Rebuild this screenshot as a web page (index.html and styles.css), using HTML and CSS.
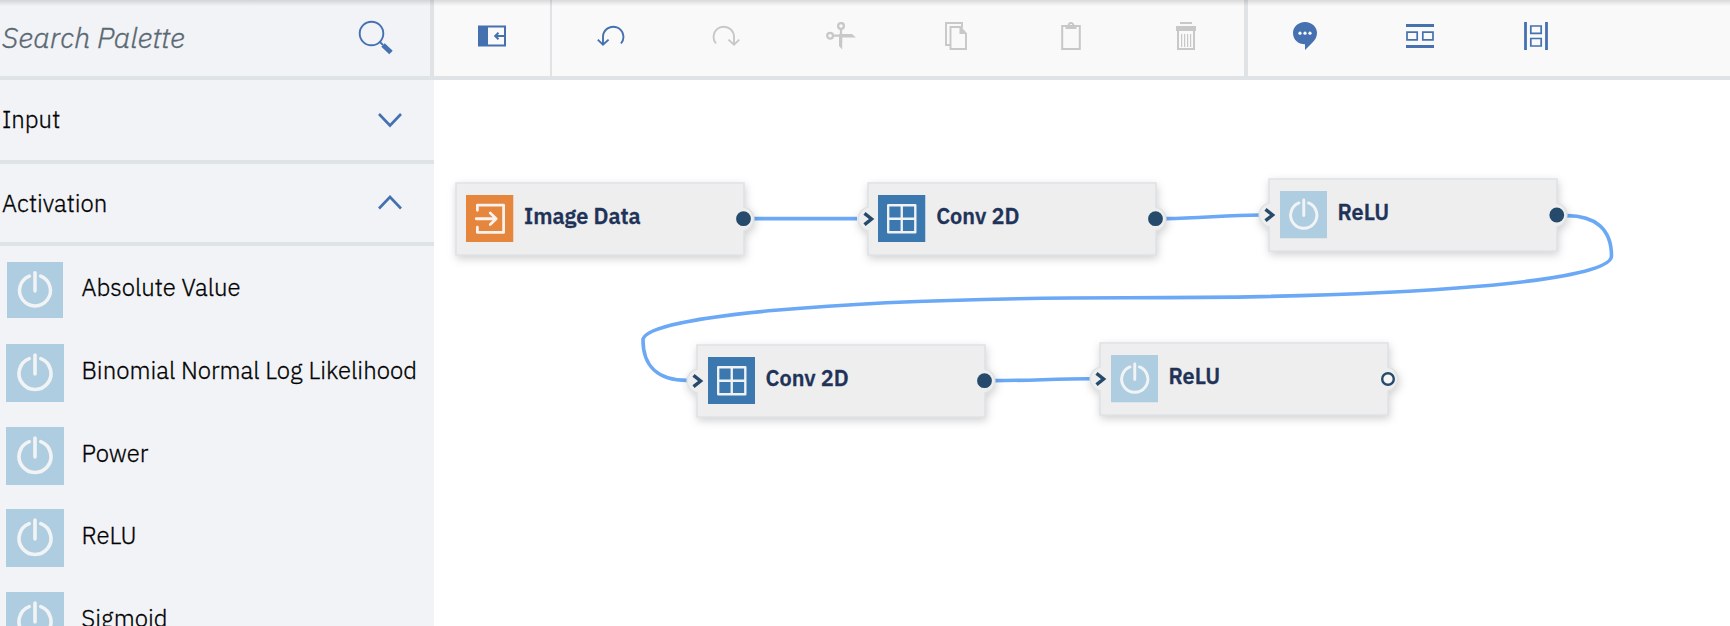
FILE: index.html
```html
<!DOCTYPE html>
<html lang="en">
<head>
<meta charset="utf-8">
<title>Flow editor</title>
<link rel="stylesheet" href="styles.css">
</head>
<body>
<svg class="defs" width="0" height="0" aria-hidden="true">
  <symbol id="power" viewBox="0 0 58 58">
    <rect width="58" height="58" fill="#aecde0"/>
    <path d="M23.2 14.6A16 16 0 1 0 34.8 14.6M29 11V30" fill="none" stroke="#f2f3f5" stroke-width="3.6" stroke-linecap="round"/>
  </symbol>
  <symbol id="grid" viewBox="0 0 48 48">
    <rect width="48" height="48" fill="#3c78b0"/>
    <path d="M10.3 10.3H37.7V37.7H10.3ZM24 10.3V37.7M10.3 24H37.7" fill="none" stroke="#f0f2f4" stroke-width="2.4" stroke-linejoin="round"/>
  </symbol>
  <symbol id="import" viewBox="0 0 48 48">
    <rect width="48" height="48" fill="#e6853c"/>
    <path d="M11.5 15.5V10.3H38V37.8H11.5V32.5M10.3 24H30M24.5 18.2L30.5 24L24.5 29.8" fill="none" stroke="#f6f2f0" stroke-width="2.8" stroke-linecap="round" stroke-linejoin="round"/>
  </symbol>
  <symbol id="shape-start" viewBox="0 0 320 74">
    <path d="M16 1H304V25.2A12 12 0 0 1 304 48.8V73H16Z" fill="#eee" stroke="#dfe3e6" stroke-width="1.6"/>
  </symbol>
  <symbol id="shape" viewBox="0 0 320 74">
    <path d="M16 1H304V25.2A12 12 0 0 1 304 48.8V73H16V48.8A12 12 0 0 1 16 25.2Z" fill="#eee" stroke="#dfe3e6" stroke-width="1.6"/>
    <path d="M12.5 31.3L19.6 37L12.5 42.7" fill="none" stroke="#264a6b" stroke-width="3.4"/>
  </symbol>
</svg>
<div class="app">
  <aside class="palette">
    <div class="search">
      <span class="search-text">Search Palette</span>
      <svg class="search-icon" width="36" height="36" viewBox="0 0 36 36"><circle cx="13.5" cy="13.5" r="11.8" fill="none" stroke="#4671b0" stroke-width="1.9"/><path d="M22 22L25 25" stroke="#4671b0" stroke-width="1.8"/><path d="M25 25L33 32.5" stroke="#4671b0" stroke-width="5"/></svg>
    </div>
    <div class="category"><span>Input</span><svg width="26" height="16" viewBox="0 0 26 16"><path d="M2 2L13 13.5L24 2"/></svg></div>
    <div class="category open"><span>Activation</span><svg width="26" height="16" viewBox="0 0 26 16"><path d="M2 13.5L13 2L24 13.5"/></svg></div>
    <div class="items">
      <div class="item"><svg class="item-icon first"><use href="#power"/></svg><span>Absolute Value</span></div>
      <div class="item"><svg class="item-icon"><use href="#power"/></svg><span>Binomial Normal Log Likelihood</span></div>
      <div class="item"><svg class="item-icon"><use href="#power"/></svg><span>Power</span></div>
      <div class="item"><svg class="item-icon"><use href="#power"/></svg><span>ReLU</span></div>
      <div class="item"><svg class="item-icon"><use href="#power"/></svg><span>Sigmoid</span></div>
    </div>
  </aside>
  <main class="main">
    <div class="toolbar">
      <div class="group one">
        <div class="tool"><svg width="28" height="28" viewBox="0 0 28 28"><path d="M0 3.5H28V24.5H0Z" fill="#4671b0"/><path d="M10 5.5H26V22.5H10Z" fill="#f9f9f9"/><path d="M27 14H18M20.5 10.7L17.2 14L20.5 17.3" fill="none" stroke="#4671b0" stroke-width="2"/></svg></div>
      </div>
      <div class="group six">
        <div class="tool"><svg class="line" width="28" height="28" viewBox="0 0 28 28"><path d="M6 22.5V14.5A10.2 10.2 0 1 1 24 21.5M.8 17.6L6 22.8L11.6 17.6"/></svg></div>
        <div class="tool off"><svg class="line" width="28" height="28" viewBox="0 0 28 28"><path d="M22 22.5V14.5A10.2 10.2 0 1 0 4 21.5M27.2 17.6L22 22.8L16.4 17.6"/></svg></div>
        <div class="tool off"><svg width="30" height="28" viewBox="0 0 30 28"><g fill="none" stroke="#c8c8c8" stroke-width="2.3"><circle cx="4.1" cy="13.7" r="2.9"/><circle cx="15" cy="3.9" r="2.9"/><path d="M7 13.7H24M15 7V20"/></g><path d="M13 12H26L30 15.5H16.2V27.5L13 24Z" fill="#c8c8c8"/></svg></div>
        <div class="tool off"><svg width="24" height="28" viewBox="0 0 24 28"><path d="M6 23H2V1H18V6M6.5 5H16L22 11.5V27H6.5Z" fill="none" stroke="#c8c8c8" stroke-width="1.9"/><path d="M15.5 4L23 12H15.5Z" fill="#c8c8c8"/></svg></div>
        <div class="tool off"><svg width="20" height="28" viewBox="0 0 20 28"><path d="M1.2 4H18.8V27H1.2Z" fill="none" stroke="#c8c8c8" stroke-width="2"/><path fill-rule="evenodd" d="M4.5 7V3.5H6.5Q7 0 10 0T13.5 3.5H15.5V7ZM10 2A1.3 1.3 0 1 0 10 4.6A1.3 1.3 0 1 0 10 2Z" fill="#c8c8c8"/></svg></div>
        <div class="tool off"><svg width="20" height="28" viewBox="0 0 20 28"><path d="M4 0H16V2H4ZM0 4H20V9H0Z" fill="#c8c8c8"/><path d="M2 8V27H18V8" fill="none" stroke="#c8c8c8" stroke-width="2"/><path d="M5.6 12V25M8.6 12V25M11.6 12V25M14.6 12V25" stroke="#c8c8c8" stroke-width="1.2"/></svg></div>
      </div>
      <div class="group rest">
        <div class="tool"><svg width="24" height="28" viewBox="0 0 24 28"><path d="M12 0C19 0 24 5 24 11C24 15 22 18 19 21L12 28V22.3C5 22.3 0 17.5 0 11C0 5 5 0 12 0Z" fill="#4671b0"/><g fill="#fff"><circle cx="7" cy="11.2" r="1.6"/><circle cx="12" cy="11.2" r="1.6"/><circle cx="17" cy="11.2" r="1.6"/></g></svg></div>
        <div class="tool"><svg class="thick" width="28" height="28" viewBox="0 0 28 28"><path class="bar" d="M0 3.5H28M0 24.5H28"/><path d="M1 10.1H11.2V17.8H1ZM16.8 10.1H27V17.8H16.8Z"/></svg></div>
        <div class="tool last"><svg class="thick" width="28" height="28" viewBox="0 0 28 28"><path class="bar" d="M3.5 0V28M24.5 0V28"/><path d="M8.8 4H19.2V11.3H8.8ZM8.8 16.5H19.2V24H8.8Z"/></svg></div>
      </div>
    </div>
    <div class="canvas">
      <svg class="links" width="1296" height="546" viewBox="434 80 1296 546">
        <path d="M754 218.6H857M1166 218.6C1200 218.6 1225 215 1260 215M1567 215.6C1595 215.6 1611.5 229 1611.5 256C1611.5 281 1420 297.8 1127 297.8S643 317 643 340C643 366 658 380.4 687 380.4M994 380.6C1030 380.6 1055 378.8 1090 378.8"/>
      </svg>
      <div class="node n1"><svg class="shape"><use href="#shape-start"/><circle class="dot" cx="303.5" cy="36.7" r="7.4"/></svg><svg class="node-icon"><use href="#import"/></svg><span>Image Data</span></div>
      <div class="node n2"><svg class="shape"><use href="#shape"/><circle class="dot" cx="303.5" cy="36.7" r="7.4"/></svg><svg class="node-icon"><use href="#grid"/></svg><span>Conv 2D</span></div>
      <div class="node n3"><svg class="shape"><use href="#shape"/><circle class="dot" cx="303.8" cy="37" r="7.4"/></svg><svg class="node-icon"><use href="#power"/></svg><span>ReLU</span></div>
      <div class="node n4"><svg class="shape"><use href="#shape"/><circle class="dot" cx="303.5" cy="36.7" r="7.4"/></svg><svg class="node-icon"><use href="#grid"/></svg><span>Conv 2D</span></div>
      <div class="node n5"><svg class="shape"><use href="#shape"/><circle class="ring" cx="304" cy="37" r="5.8"/></svg><svg class="node-icon"><use href="#power"/></svg><span>ReLU</span></div>
    </div>
  </main>
  <div class="top-shadow"></div>
</div>
</body>
</html>
```
FILE: styles.css
```css
* { box-sizing: border-box; }
body { margin: 0; overflow: hidden; font-family: "IBM Plex Sans", Roboto, sans-serif; background: #fff; }
svg { display: block; flex: none; }
.defs { position: absolute; }
.app { position: relative; display: flex; width: 1730px; height: 626px; overflow: hidden; }
.top-shadow { position: absolute; top: 0; left: 0; right: 0; height: 6px; background: linear-gradient(rgba(0,0,0,.13), rgba(0,0,0,0)); }

.palette { width: 434px; flex: none; background: #f1f3f7; color: #000; font-size: 24px; font-weight: 300; white-space: nowrap; -webkit-text-stroke: .3px currentColor; }
.search { display: flex; justify-content: space-between; height: 80px; padding: 19px 36px 0 2px; border-bottom: 4px solid #dfe3e6; border-right: 4px solid #dfe3e6; }
.search-text { font-size: 29px; line-height: 36px; font-style: italic; color: #5a6872; }
.search-icon { margin-top: 1px; }
.category { display: flex; align-items: center; justify-content: space-between; height: 84px; padding: 0 31px 0 2px; border-bottom: 4px solid #dfe3e6; }
.category.open { height: 82px; }
.category span { margin-top: -3px; }
.category.open span { margin-top: -1px; }
.category svg { fill: none; stroke: #4671b0; stroke-width: 2.6; }
.items { padding-top: 3px; }
.item { display: flex; align-items: center; height: 82.7px; padding-left: 6px; }
.item-icon { width: 58px; height: 58px; margin-right: 17.5px; }
.item-icon.first { width: 56px; height: 56px; margin: 0 18.5px 0 1px; }
.item span { margin-top: -6px; }

.main { flex: 1; display: flex; flex-direction: column; }
.toolbar { display: flex; height: 80px; background: #f9f9f9; border-bottom: 4px solid #dfe3e6; }
.group { display: flex; }
.one { width: 118px; border-right: 2px solid #dfe3e6; }
.six { width: 696px; border-right: 4px solid #dfe3e6; padding-left: 1px; }
.rest { flex: 1; }
.tool { flex: 1; display: flex; justify-content: center; padding-top: 22px; }
.rest .tool { flex: 0 0 115px; padding-right: 1px; }
.rest .last { padding: 22px 0 0 1px; }
.line { fill: none; stroke: #4671b0; stroke-width: 1.9; }
.off .line { stroke: #c8c8c8; }
.thick { fill: none; stroke: #4671b0; stroke-width: 1.7; }
.thick .bar { stroke-width: 2.8; }

.canvas { flex: 1; position: relative; }
.links { position: absolute; top: 0; left: 0; fill: none; stroke: #6ba8f5; stroke-width: 3.6; }
.node { position: absolute; display: flex; width: 290px; height: 74px; padding: 13px 0 0 11.5px; font-size: 21.7px; font-weight: 600; color: #1f3358; white-space: nowrap; }
.node span { position: relative; margin-left: 10.5px; line-height: 42px; -webkit-text-stroke: .3px currentColor; }
.shape { position: absolute; left: -15px; top: 0; width: 320px; height: 74px; overflow: visible; filter: drop-shadow(1px 3px 4px rgba(0,0,0,.18)); }
.dot { fill: #264a6b; }
.ring { fill: #f6f6f6; stroke: #264a6b; stroke-width: 2.4; }
.node-icon { position: relative; width: 47.5px; height: 47.5px; }
.n1 { left: 20.5px; top: 101.5px; }
.n2 { left: 432.7px; top: 101.5px; }
.n3 { left: 834px; top: 98px; }
.n3 span { line-height: 43px; }
.n4 { left: 262px; top: 263.7px; }
.n5 { left: 665px; top: 262px; }
```
